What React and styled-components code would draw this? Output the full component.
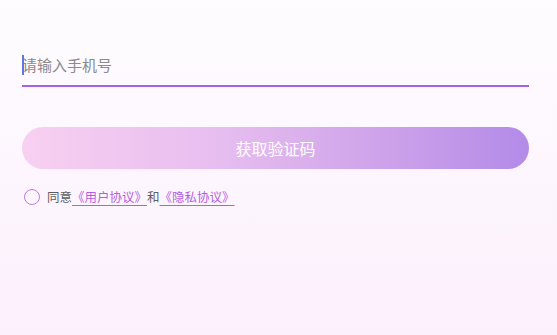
import React from "react";
import styled, { createGlobalStyle } from "styled-components";

const GlobalStyle = createGlobalStyle`
  html, body { margin: 0; padding: 0; height: 100%; }
  body {
    font-family: "Noto Sans CJK SC", "Noto Sans", sans-serif;
    background: linear-gradient(180deg, #fefcff 0%, #fdf6fe 50%, #fcf0fd 100%);
  }
  #root { min-height: 100vh; }
`;

const Page = styled.div`
  min-height: 335px;
  box-sizing: border-box;
  padding: 46px 28px 0 22px;
  display: flex;
  flex-direction: column;
`;

const Field = styled.div`
  position: relative;
  height: 39px;
  border-bottom: 2px solid #a95fe0;
  display: flex;
  align-items: center;
`;

const Input = styled.input`
  flex: 1;
  border: none;
  outline: none;
  background: transparent;
  padding: 0;
  margin-top: -2px;
  font-family: "Noto Sans CJK SC", "Noto Sans", sans-serif;
  font-size: 15px;
  color: #333;
  &::placeholder { color: #8a8a8a; }
`;

const Caret = styled.span`
  position: absolute;
  left: 0;
  top: 9px;
  width: 2px;
  height: 20px;
  background: #5b78e6;
`;

const Button = styled.button`
  margin-top: 40px;
  height: 42px;
  border: none;
  border-radius: 21px;
  background: linear-gradient(90deg, #f8d0f1 0%, #e6bdef 40%, #cfa3ea 70%, #b38be8 100%);
  color: #ffffff;
  font-family: "Noto Sans CJK SC", "Noto Sans", sans-serif;
  font-size: 16px;
  padding: 0;
  cursor: pointer;
`;

const Agreement = styled.div`
  margin-top: 18px;
  display: flex;
  align-items: center;
  font-size: 12.5px;
  color: #5e5e5e;
  line-height: 20px;
`;

const Radio = styled.span`
  box-sizing: border-box;
  width: 16px;
  height: 16px;
  margin-left: 2px;
  margin-right: 7px;
  border-radius: 50%;
  border: 1.5px solid #c27ae2;
`;

const Link = styled.a`
  color: #b45fe0;
  text-decoration: underline;
  text-underline-offset: 3px;
  text-decoration-thickness: 1px;
`;

export default function App() {
  return (
    <>
      <GlobalStyle />
      <Page>
        <Field>
          <Input placeholder="请输入手机号" />
          <Caret />
        </Field>
        <Button>获取验证码</Button>
        <Agreement>
          <Radio />
          <span>同意</span>
          <Link>《用户协议》</Link>
          <span>和</span>
          <Link>《隐私协议》</Link>
        </Agreement>
      </Page>
    </>
  );
}
